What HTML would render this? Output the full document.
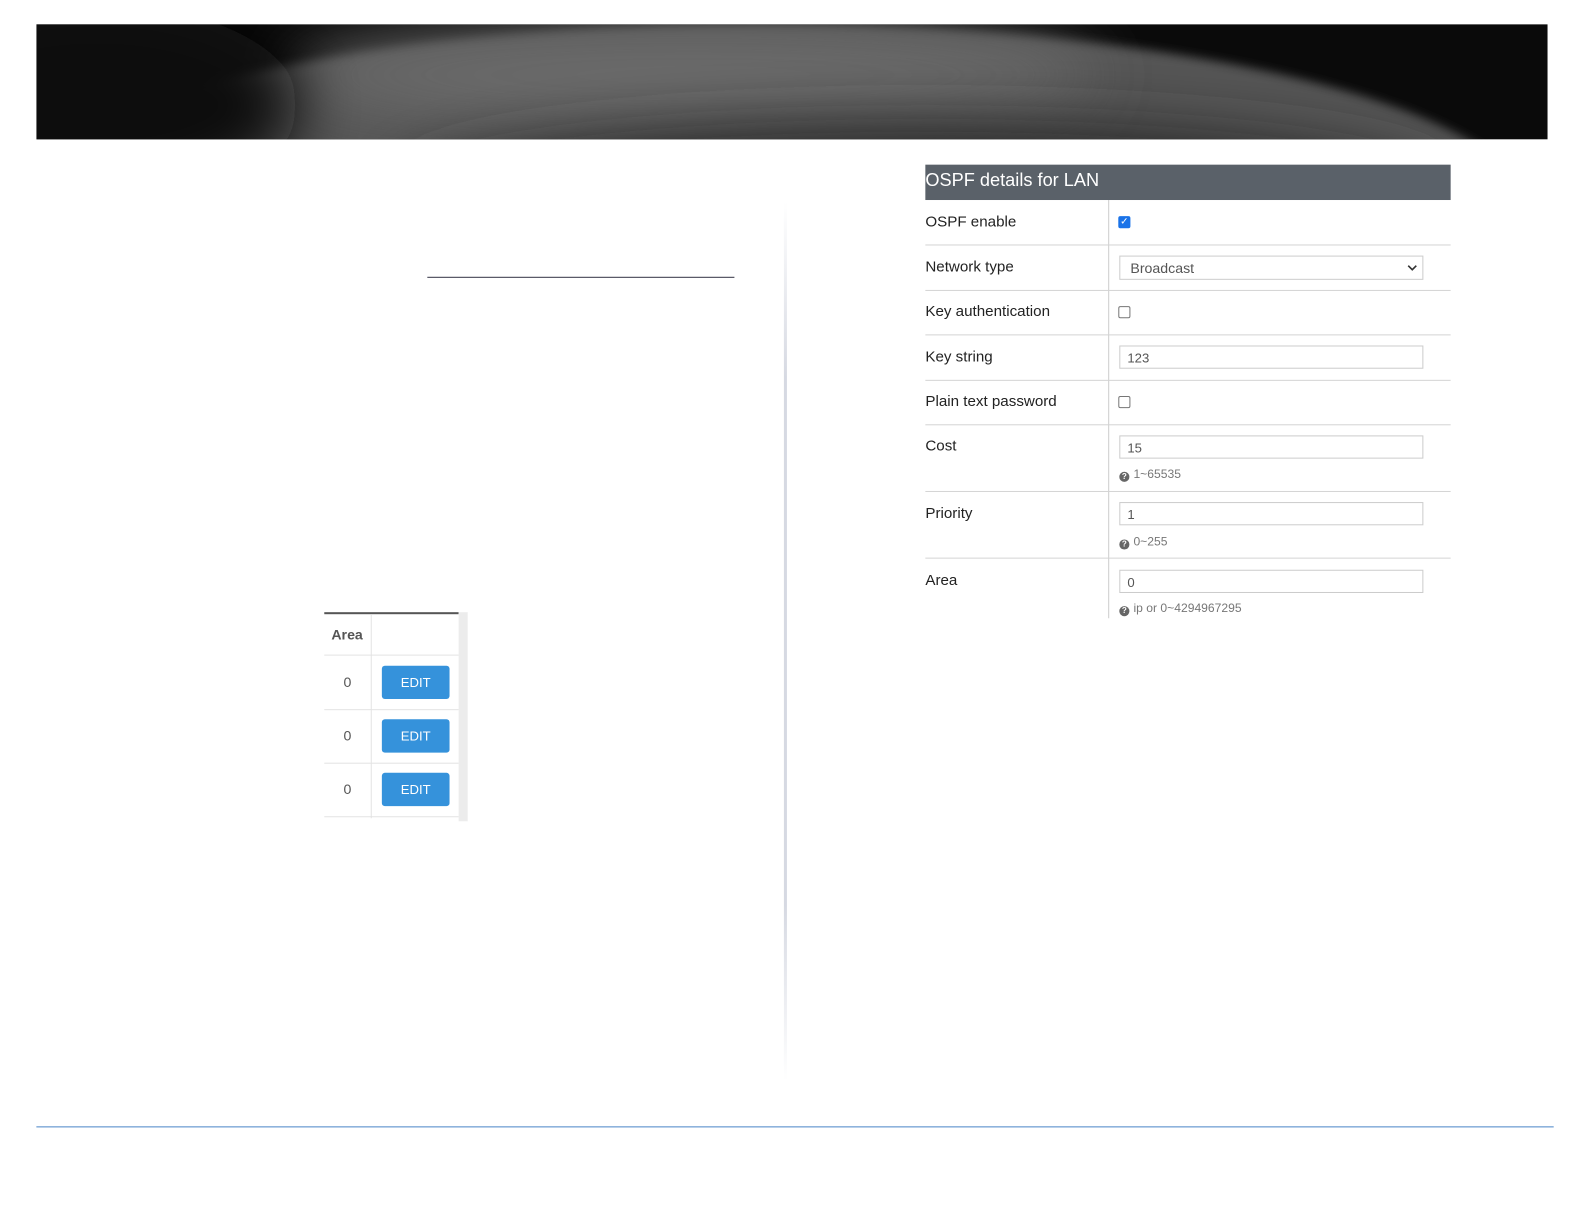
<!DOCTYPE html>
<html><head><style>
body{margin:0;width:1584px;height:1224px;background:#fff;position:relative;font-family:"Liberation Sans",Arial,sans-serif;overflow:hidden}
#w{position:absolute;left:0;top:0;width:1568px;height:1212px;transform:scale(1.0102);transform-origin:0 0}
.a{position:absolute}
.lbl{position:absolute;left:916px;font-size:15px;color:#222}
.inp{position:absolute;left:1108px;width:301px;height:23px;border:1px solid #ccc;font-size:13px;color:#555;box-sizing:border-box;padding:5px 7px;line-height:13px}
.hr{position:absolute;left:916px;width:520px;height:1px;background:#d4d4d4}
.cb{position:absolute;left:1107px;width:12px;height:12px;border:1px solid #767676;border-radius:2px;box-sizing:border-box}
.hint{position:absolute;left:1108px;font-size:12px;color:#777}
.q{display:inline-block;width:10px;height:10px;border-radius:50%;background:#666;color:#fff;font-size:8px;line-height:10px;text-align:center;font-weight:bold;margin-right:4px;vertical-align:-1px}
.btn{position:absolute;left:378px;width:67px;height:33px;background:#3592db;border-radius:3px;color:#fff;font-size:13px;text-align:center;line-height:33px}
.z{position:absolute;left:340px;font-size:14px;color:#555}
.th{position:absolute;left:321px;width:133px;height:1px;background:#e3e3e3}
</style></head><body><div id="w">
<svg class="a" style="left:36px;top:24px" width="1496" height="114">
<defs><filter id="f" x="-100%" y="-200%" width="300%" height="500%"><feGaussianBlur stdDeviation="30"/></filter>
<filter id="g"><feGaussianBlur stdDeviation="5"/></filter>
<clipPath id="c"><rect width="1496" height="114"/></clipPath></defs>
<rect width="1496" height="114" fill="#0a0a0a"/>
<g clip-path="url(#c)">
<ellipse cx="720" cy="190" rx="760" ry="190" fill="#555" filter="url(#g)"/>
<ellipse cx="650" cy="50" rx="400" ry="50" fill="#6a6a6a" filter="url(#f)"/>
<ellipse cx="60" cy="80" rx="200" ry="100" fill="#111" filter="url(#f)"/>
<ellipse cx="880" cy="170" rx="520" ry="70" fill="#2a2a2a" filter="url(#f)"/>
</g></svg>
<div class="a" style="left:423px;top:274px;width:304px;height:1px;background:#334"></div>
<div class="a" style="left:776px;top:200px;width:3px;height:870px;background:linear-gradient(#fff,#d6d9e2 20%,#d6d9e2 80%,#fff)"></div>
<div class="a" style="left:36px;top:1115px;width:1502px;height:1px;background:#4a86c8"></div>

<div class="a" style="left:321px;top:606px;width:133px;height:2px;background:#555"></div>
<div class="a" style="left:454px;top:606px;width:9px;height:207px;background:#ececec"></div>
<div class="a" style="left:367px;top:608px;width:1px;height:202px;background:#e3e3e3"></div>
<div class="a" style="left:328px;top:620px;font-size:14px;font-weight:bold;color:#555">Area</div>
<div class="th" style="top:648px"></div><div class="th" style="top:702px"></div><div class="th" style="top:755px"></div><div class="th" style="top:808px"></div>
<div class="z" style="top:667px">0</div><div class="btn" style="top:659px">EDIT</div>
<div class="z" style="top:720px">0</div><div class="btn" style="top:712px">EDIT</div>
<div class="z" style="top:773px">0</div><div class="btn" style="top:765px">EDIT</div>

<div class="a" style="left:916px;top:163px;width:520px;height:35px;background:#5a6169;color:#fff;font-size:18px;line-height:31px">OSPF details for LAN</div>
<div class="a" style="left:1097px;top:198px;width:1px;height:414px;background:#ccc"></div>
<div class="lbl" style="top:211px">OSPF enable</div>
<div class="cb" style="top:214px;background:#1a73e8;border-color:#1a73e8;color:#fff;font-size:10px;line-height:10px;text-align:center">✓</div>
<div class="hr" style="top:242px"></div>
<div class="lbl" style="top:256px">Network type</div>
<div class="inp" style="top:253px;height:24px;font-size:14px;padding:5px 10px">Broadcast<svg style="position:absolute;right:5px;top:7px" width="10" height="8"><path d="M1 2l4 4 4-4" fill="none" stroke="#333" stroke-width="1.6"/></svg></div>
<div class="hr" style="top:287px"></div>
<div class="lbl" style="top:300px">Key authentication</div>
<div class="cb" style="top:303px"></div>
<div class="hr" style="top:331px"></div>
<div class="lbl" style="top:345px">Key string</div>
<div class="inp" style="top:342px">123</div>
<div class="hr" style="top:376px"></div>
<div class="lbl" style="top:389px">Plain text password</div>
<div class="cb" style="top:392px"></div>
<div class="hr" style="top:420px"></div>
<div class="lbl" style="top:433px">Cost</div>
<div class="inp" style="top:431px">15</div>
<div class="hint" style="top:462px"><span class="q">?</span>1~65535</div>
<div class="hr" style="top:486px"></div>
<div class="lbl" style="top:500px">Priority</div>
<div class="inp" style="top:497px">1</div>
<div class="hint" style="top:529px"><span class="q">?</span>0~255</div>
<div class="hr" style="top:552px"></div>
<div class="lbl" style="top:566px">Area</div>
<div class="inp" style="top:564px">0</div>
<div class="hint" style="top:595px"><span class="q">?</span>ip or 0~4294967295</div>
</div></body></html>
